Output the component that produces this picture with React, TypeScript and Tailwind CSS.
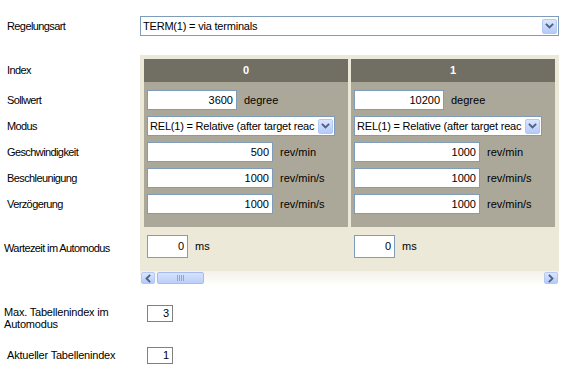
import React from 'react';

const Chevron = ({ dir = 'down' }: { dir?: 'down' | 'left' | 'right' }) => {
  const d =
    dir === 'down' ? 'M1.5 1.5 L4.5 4.5 L7.5 1.5' : dir === 'left' ? 'M4.5 1.5 L1.5 4.5 L4.5 7.5' : 'M1.5 1.5 L4.5 4.5 L1.5 7.5';
  const size = dir === 'down' ? { w: 9, h: 6 } : { w: 6, h: 9 };
  return (
    <svg width={size.w} height={size.h} viewBox={`0 0 ${size.w} ${size.h}`}>
      <path d={d} stroke="#4D6185" strokeWidth="1.8" fill="none" strokeLinecap="square" />
    </svg>
  );
};

const DropButton = () => (
  <div className="w-[15px] h-[15px] shrink-0 rounded-[2px] border border-[#B4C8F6] bg-gradient-to-b from-[#DCE6FD] to-[#B4CAF9] flex items-center justify-center">
    <Chevron />
  </div>
);

const Select = ({ text, className }: { text: string; className: string }) => (
  <div className={`h-[20px] border border-[#7F9DB9] bg-white flex items-center pl-[2px] pr-[1px] ${className}`}>
    <span className="flex-1 overflow-hidden whitespace-nowrap text-[11px] tracking-[-0.2px]">{text}</span>
    <DropButton />
  </div>
);

const Field = ({ value, unit, className }: { value: string; unit: string; className: string }) => (
  <div className="flex items-center">
    <div className={`h-[20px] border border-[#7F9DB9] bg-white flex items-center justify-end pr-[3px] text-[11px] ${className}`}>
      {value}
    </div>
    <span className="ml-[7px]">{unit}</span>
  </div>
);

const columns = [
  { idx: '0', soll: '3600', speed: '500', acc: '1000', dec: '1000', wait: '0' },
  { idx: '1', soll: '10200', speed: '1000', acc: '1000', dec: '1000', wait: '0' },
];

const App = () => {
  return (
    <div className="w-[585px] h-[372px] bg-white text-black text-[11px] font-['Liberation_Sans',Arial,sans-serif] overflow-hidden">
      <div className="flex pt-[16px]">
        <div className="w-[140px] h-[20px] pl-[7px] flex items-center tracking-[-0.6px]">Regelungsart</div>
        <Select text="TERM(1) = via terminals" className="w-[419px]" />
      </div>

      <div className="flex mt-[19px]">
        <div className="w-[140px] flex flex-col tracking-[-0.6px]">
          <div className="h-[4px]" />
          <div className="h-[23px] pl-[7px] flex items-center">Index</div>
          <div className="h-[5px]" />
          <div className="h-[26px] pl-[7px] flex items-center">Sollwert</div>
          <div className="h-[26px] pl-[7px] flex items-center">Modus</div>
          <div className="h-[26px] pl-[7px] flex items-center">Geschwindigkeit</div>
          <div className="h-[26px] pl-[7px] flex items-center">Beschleunigung</div>
          <div className="h-[26px] pl-[7px] flex items-center">Verzögerung</div>
          <div className="h-[18px]" />
          <div className="h-[23px] pl-[4px] flex items-center pt-[3px]">Wartezeit im Automodus</div>
        </div>

        <div className="w-[419px]">
          <div className="bg-[#ECE9D8] px-[4px] pt-[4px]">
            <div className="flex gap-[3px]">
              {columns.map((c) => (
                <div key={c.idx} className="w-[204px] bg-[#ACA899]">
                  <div className="h-[23px] bg-[#716F64] text-white font-bold flex items-center justify-center">{c.idx}</div>
                  <div className="pt-[5px] pb-[10px] pl-[3px]">
                    <div className="h-[26px] flex items-center">
                      <Field value={c.soll} unit="degree" className="w-[90px]" />
                    </div>
                    <div className="h-[26px] flex items-center">
                      <Select text="REL(1) = Relative (after target reac" className="w-[188px]" />
                    </div>
                    <div className="h-[26px] flex items-center">
                      <Field value={c.speed} unit="rev/min" className="w-[126px]" />
                    </div>
                    <div className="h-[26px] flex items-center">
                      <Field value={c.acc} unit="rev/min/s" className="w-[126px]" />
                    </div>
                    <div className="h-[26px] flex items-center">
                      <Field value={c.dec} unit="rev/min/s" className="w-[126px]" />
                    </div>
                  </div>
                </div>
              ))}
            </div>
            <div className="flex gap-[3px] pt-[8px] pb-[13px]">
              {columns.map((c) => (
                <div key={c.idx} className="w-[204px] pl-[3px]">
                  <div className="flex items-center">
                    <div className="w-[41px] h-[23px] border border-[#7F9DB9] bg-white flex items-center justify-end pr-[3px]">
                      {c.wait}
                    </div>
                    <span className="ml-[7px]">ms</span>
                  </div>
                </div>
              ))}
            </div>
          </div>

          <div className="h-[14px] bg-gradient-to-b from-[#F3F1EA] to-[#FEFEFB] flex items-center px-[1px]">
            <div className="w-[14px] h-[12px] rounded-[2px] border border-[#B4C8F6] bg-gradient-to-b from-[#DCE6FD] to-[#B4CAF9] flex items-center justify-center">
              <Chevron dir="left" />
            </div>
            <div className="ml-[2px] w-[47px] h-[12px] rounded-[2px] border border-[#A6BCF0] bg-gradient-to-b from-[#D6E2FD] to-[#BCCFFA] flex items-center justify-center gap-[1px]">
              <div className="w-[1px] h-[6px] bg-[#8CA4E0]" />
              <div className="w-[1px] h-[6px] bg-[#8CA4E0]" />
              <div className="w-[1px] h-[6px] bg-[#8CA4E0]" />
              <div className="w-[1px] h-[6px] bg-[#8CA4E0]" />
            </div>
            <div className="flex-1" />
            <div className="w-[14px] h-[12px] rounded-[2px] border border-[#B4C8F6] bg-gradient-to-b from-[#DCE6FD] to-[#B4CAF9] flex items-center justify-center">
              <Chevron dir="right" />
            </div>
          </div>
        </div>
      </div>

      <div className="flex mt-[20px]">
        <div className="w-[147px] pl-[4px] leading-[12px] pt-[1px] tracking-[-0.2px]">
          Max. Tabellenindex im
          <br />
          Automodus
        </div>
        <div className="w-[26px] h-[17px] border border-[#808080] flex items-center justify-end pr-[3px]">3</div>
      </div>

      <div className="flex mt-[17px] items-center">
        <div className="w-[147px] pl-[7px] tracking-[-0.2px]">Aktueller Tabellenindex</div>
        <div className="w-[26px] h-[17px] border border-[#808080] flex items-center justify-end pr-[3px]">1</div>
      </div>
    </div>
  );
};

export default App;
